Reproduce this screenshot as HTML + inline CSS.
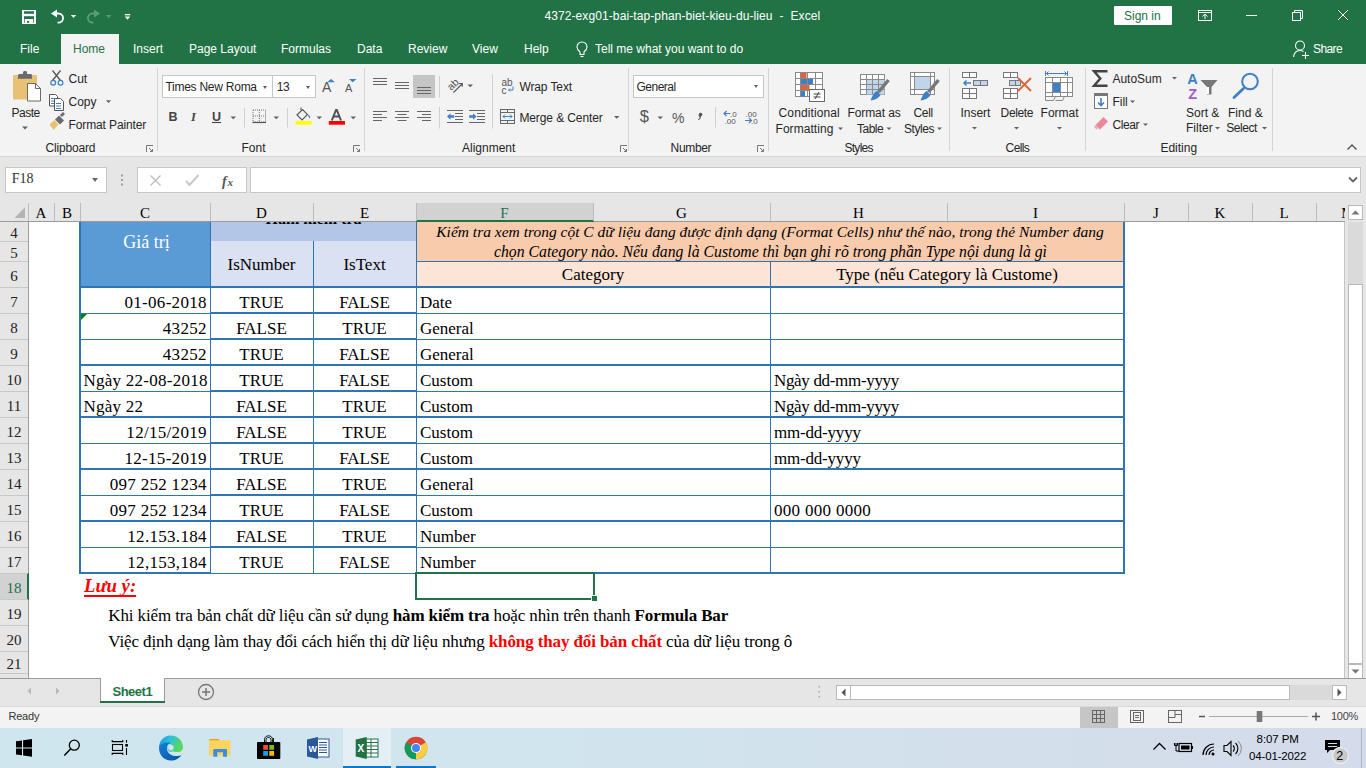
<!DOCTYPE html>
<html><head><meta charset="utf-8">
<style>
*{margin:0;padding:0;box-sizing:border-box}
html,body{width:1366px;height:768px;overflow:hidden;background:#fff;font-family:"Liberation Sans",sans-serif}
.a{position:absolute}
.ui{font-family:"Liberation Sans",sans-serif;font-size:12px;color:#262626;white-space:nowrap;line-height:1}
.sf{font-family:"Liberation Serif",serif;white-space:nowrap;line-height:1;color:#000}
svg{position:absolute;overflow:visible}
#title{left:0;top:0;width:1366px;height:64px;background:#217346}
#ribbon{left:0;top:64px;width:1366px;height:93px;background:#f3f3f3;border-bottom:1px solid #d6d6d6}
#fbar{left:0;top:157px;width:1366px;height:64px;background:#e6e6e6}
.sep{position:absolute;width:1px;background:#d4d4d4}
.lbl{position:absolute;font-size:12px;color:#444;top:142px}
.dd{position:absolute;width:0;height:0;border-left:3px solid transparent;border-right:3px solid transparent;border-top:3px solid #606060}
</style></head><body>
<!-- TITLE BAR -->
<div id="title" class="a"></div>
<div id="ribbon" class="a"></div>
<div id="fbar" class="a"></div>
<!-- QAT -->
<svg style="left:0;top:0" width="200" height="34">
 <path d="M22 10h14v14h-14zM24 11.2v11.6h10v-11.6z" fill="#fff" fill-rule="evenodd"/>
 <rect x="24" y="13.8" width="10" height="2.4" fill="#fff"/>
 <path d="M24.7 19h8.6v4h-4.1v-2h-2.2v2h-2.3z" fill="#fff"/>
 <path d="M51 13.5l6-4v8z" fill="#fff"/>
 <path d="M55.5 13.5h3a4.6 4.6 0 0 1 0 9.2h-1" fill="none" stroke="#fff" stroke-width="1.8"/>
 <path d="M70.8 15h5.4l-2.7 3z" fill="#fff"/>
 <path d="M100 13.5l-6-4v8z" fill="#5e9c79"/>
 <path d="M95.5 13.5h-3a4.6 4.6 0 0 0 0 9.2h1" fill="none" stroke="#5e9c79" stroke-width="1.8"/>
 <path d="M106 15h5.4l-2.7 3z" fill="#5e9c79"/>
 <rect x="124.8" y="14" width="5.4" height="1.3" fill="#fff"/>
 <path d="M124.8 16.5h5.4l-2.7 3.2z" fill="#fff"/>
</svg>
<div class="a ui" style="left:544.4px;top:10px;color:#fff;font-size:12px;letter-spacing:0.1px">4372-exg01-bai-tap-phan-biet-kieu-du-lieu&nbsp; - &nbsp;Excel</div>
<div class="a" style="left:1114px;top:6px;width:58px;height:19px;background:#fff;border-radius:1px"></div>
<div class="a ui" style="left:1124px;top:10px;color:#217346;font-size:12px">Sign in</div>
<svg style="left:1190px;top:0" width="176" height="34">
 <g fill="none" stroke="#fff" stroke-width="1">
  <rect x="8.5" y="10.5" width="13" height="10"/>
  <path d="M8.5 12.5h13"/>
  <path d="M15 19v-5M12.5 16.5l2.5-2.5 2.5 2.5"/>
  <path d="M56 15.5h11"/>
  <rect x="102.5" y="12.5" width="8" height="8"/>
  <path d="M104.5 12.5v-2h8v8h-2"/>
  <path d="M148 10l10 10M158 10l-10 10"/>
 </g>
</svg>
<!-- TABS -->
<div class="a" style="left:61px;top:34px;width:58px;height:31px;background:#f3f3f3"></div>
<div class="a ui" style="left:20px;top:43px;color:#fff">File</div>
<div class="a ui" style="left:73px;top:43px;color:#217346">Home</div>
<div class="a ui" style="left:133px;top:43px;color:#fff">Insert</div>
<div class="a ui" style="left:189px;top:43px;color:#fff">Page Layout</div>
<div class="a ui" style="left:281px;top:43px;color:#fff">Formulas</div>
<div class="a ui" style="left:357px;top:43px;color:#fff">Data</div>
<div class="a ui" style="left:408px;top:43px;color:#fff">Review</div>
<div class="a ui" style="left:472px;top:43px;color:#fff">View</div>
<div class="a ui" style="left:524px;top:43px;color:#fff">Help</div>
<svg style="left:574px;top:38px" width="20" height="22">
 <path d="M6 16.5v-2.5c-2-1.5-3-3-3-5a5 5 0 0 1 10 0c0 2-1 3.5-3 5v2.5z" fill="none" stroke="#fff" stroke-width="1.1"/>
 <path d="M6.5 18.5h3" stroke="#fff" stroke-width="1.1"/>
</svg>
<div class="a ui" style="left:595px;top:43px;color:#fff">Tell me what you want to do</div>
<svg style="left:1290px;top:38px" width="24" height="22">
 <g fill="none" stroke="#fff" stroke-width="1.1">
  <circle cx="10" cy="7.5" r="4.5"/>
  <path d="M3.5 19c0.5-4 3-6.5 6.5-6.5c1.5 0 2.5 0.4 3.5 1"/>
  <path d="M15.5 14v7M12 17.5h7"/>
 </g>
</svg>
<div class="a ui" style="left:1313px;top:43px;color:#fff;letter-spacing:-0.6px">Share</div>

<!-- RIBBON: CLIPBOARD -->
<svg style="left:0;top:64px" width="160" height="92">
 <rect x="13" y="11" width="24" height="24.6" rx="1" fill="#e9c175"/>
 <path d="M18 14.8h14v-3.3c0-1-0.6-1.5-1.5-1.5h-3.5v-1.5c0-0.8-0.6-1.5-1.5-1.5h-1c-0.8 0-1.5 0.7-1.5 1.5v1.5h-3.5c-0.9 0-1.5 0.5-1.5 1.5z" fill="#6b6b6b"/>
 <path d="M27.5 19.5h8l5 5v12.5h-13z" fill="#fff" stroke="#6b6b6b" stroke-width="1"/>
 <path d="M35.5 19.5v5h5" fill="none" stroke="#6b6b6b" stroke-width="1"/>
 <path d="M22 62.5h6l-3 3z" fill="#606060"/>
 <!-- scissors -->
 <g fill="none" stroke="#555" stroke-width="1.3"><path d="M52.5 6.5l8 10M60.5 6.5l-8 10"/></g>
 <g fill="none" stroke="#3f7fc6" stroke-width="1.2"><circle cx="53.2" cy="18.8" r="2.4"/><circle cx="60.5" cy="18.8" r="2.4"/></g>
 <!-- copy -->
 <g fill="#fff" stroke="#555" stroke-width="1"><path d="M49.5 30.5h6l2 2v9.5h-8z"/><path d="M54.5 34.5h6l3 3v9h-9z"/></g>
 <g stroke="#3f7fc6" stroke-width="1"><path d="M51 34.5h3M51 37h3M51 39.5h3M56 39.5h5M56 42h5M56 44.5h5"/></g>
 <path d="M106 36.3h5l-2.5 2.7z" fill="#606060"/>
 <!-- format painter -->
 <path d="M49.5 60.5l5-4.5 4 4.5-5 5.5z" fill="#e9c175"/>
 <path d="M55 55.5l4-4 5 5-4 4z" fill="#6b6b6b"/>
 <path d="M60 51l3-3 2 2-3 3z" fill="#6b6b6b"/>
 <!-- launcher -->
 <g fill="none" stroke="#777" stroke-width="1"><path d="M146.5 88v-6.5h6.5"/><path d="M149 84l3.5 3.5M150 87.5h2.5v-2.5"/></g>
</svg>
<div class="a ui" style="left:68.5px;top:72.8px">Cut</div>
<div class="a ui" style="left:68.5px;top:95.9px">Copy</div>
<div class="a ui" style="left:68.5px;top:118.5px;letter-spacing:-0.12px">Format Painter</div>
<div class="a ui" style="left:11.5px;top:106.7px;letter-spacing:-0.5px">Paste</div>
<div class="a ui" style="left:45.6px;top:142.3px;color:#262626;letter-spacing:-0.18px">Clipboard</div>
<div class="sep" style="left:157px;top:68px;height:83px"></div>
<!-- FONT -->
<div class="a" style="left:162px;top:75px;width:154px;height:23px;background:#fff;border:1px solid #c6c6c6"></div>
<div class="a" style="left:272px;top:75px;width:1px;height:23px;background:#c6c6c6"></div>
<div class="a ui" style="left:165.4px;top:80.7px;letter-spacing:-0.25px">Times New Roma</div>
<div class="a ui" style="left:276.8px;top:80.7px;letter-spacing:-0.5px">13</div>
<div class="dd" style="left:263px;top:85.5px;border-width:3px 2.8px 0"></div>
<div class="dd" style="left:305.5px;top:85.5px;border-width:3px 2.8px 0"></div>
<svg style="left:160px;top:64px" width="210" height="92">
 <g fill="#555" font-family="Liberation Sans" >
  <text x="162" y="28" font-size="14">A</text>
  <text x="185" y="28" font-size="11">A</text>
 </g>
 <path d="M167 18.3h8l-4-3.3z" fill="#3f7fc6"/>
 <path d="M189 15h7.5l-3.75 3.3z" fill="#3f7fc6"/>
 <text x="8.5" y="57" font-size="12.5" font-weight="bold" font-family="Liberation Sans" fill="#444">B</text>
 <text x="31" y="57" font-size="12.5" font-style="italic" font-family="Liberation Serif" fill="#444" font-weight="bold">I</text>
 <text x="52" y="57" font-size="12.5" font-weight="bold" font-family="Liberation Sans" fill="#444">U</text>
 <path d="M52 58.5h9" stroke="#444" stroke-width="1.1"/>
 <path d="M70.5 52.5h5.5l-2.75 2.7z" fill="#606060"/>
 <path d="M84.5 44v19.5" stroke="#cfcfcf"/>
 <g fill="none" stroke="#777" stroke-width="1" stroke-dasharray="1 1"><rect x="93" y="46" width="12.5" height="12"/><path d="M99.3 46v12M93 52h12.5"/></g>
 <path d="M92.5 58.5h13.5" stroke="#555" stroke-width="1.2"/>
 <path d="M113.5 52.5h5.5l-2.75 2.7z" fill="#606060"/>
 <path d="M127.5 44v19.5" stroke="#cfcfcf"/>
 <path d="M137 51l5.5-5.5 5 5-5.5 5.5z" fill="none" stroke="#555" stroke-width="1.1"/>
 <path d="M141 46v-2.5" stroke="#555" stroke-width="1.1"/>
 <path d="M148 50.5c1.5 0.5 2.5 2 2 4l-1.5-1.5z" fill="#3f7fc6"/>
 <rect x="135.5" y="57" width="16" height="3.7" fill="#ffff00"/>
 <path d="M156.5 52.5h5.5l-2.75 2.7z" fill="#606060"/>
 <path d="M171.8 56.5l4.2-10.5h0.8l4.2 10.5M173.5 52.5h6" fill="none" stroke="#505050" stroke-width="2"/>
 <rect x="168.8" y="57" width="16.2" height="3.7" fill="#ff0000"/>
 <path d="M190.5 52.5h5.5l-2.75 2.7z" fill="#606060"/>
 <g fill="none" stroke="#777" stroke-width="1"><path d="M193.5 88v-6.5h6.5"/><path d="M196 84l3.5 3.5M197 87.5h2.5v-2.5"/></g>
</svg>
<div class="a ui" style="left:241.5px;top:142.4px">Font</div>
<div class="sep" style="left:364px;top:68px;height:83px"></div>
<!-- ALIGNMENT -->
<div class="a" style="left:413px;top:75px;width:22px;height:23px;background:#c5c5c5"></div>
<svg style="left:360px;top:64px" width="270" height="92">
 <g stroke="#666" stroke-width="1">
  <path d="M13 14.5h14M13 17.5h14M13 20.5h14"/>
  <path d="M35 18.5h14M35 21.5h14M35 24.5h14"/>
  <path d="M57 23.5h14M57 26.5h14M57 29.5h14"/>
  <path d="M13 47.5h14M13 50.5h9M13 53.5h14M13 56.5h9"/>
  <path d="M35 47.5h14M37.5 50.5h9M35 53.5h14M37.5 56.5h9"/>
  <path d="M57 47.5h14M62 50.5h9M57 53.5h14M62 56.5h9"/>
  <path d="M87 46.5h16M95 49.5h8M95 52.5h8M95 55.5h8M87 58.5h16"/>
  <path d="M109 46.5h16M117 49.5h8M117 52.5h8M117 55.5h8M109 58.5h16"/>
 </g>
 <path d="M79.5 12v21.5M79.5 43v21.5" stroke="#cfcfcf"/>
 <path d="M87 52.5l3.5-3.3v2.1h3.8v2.4h-3.8v2.1z" fill="#3f7fc6"/>
 <path d="M116.5 52.5l-3.5-3.3v2.1h-3.8v2.4h3.8v2.1z" fill="#3f7fc6"/>
 <!-- orientation -->
 <text x="86.5" y="24.5" font-size="10.5" font-family="Liberation Sans" fill="#555" transform="rotate(-45 92 20)">ab</text>
 <path d="M93.5 28.5l8.5-8.5M99 19.5h3.3v3.3" fill="none" stroke="#555" stroke-width="1.1"/>
 <path d="M107.5 20.5h5.5l-2.75 2.7z" fill="#606060"/>
 <path d="M132.5 10.5v54" stroke="#cfcfcf"/>
 <!-- wrap text -->
 <text x="141.5" y="22" font-size="10" font-family="Liberation Sans" fill="#555">ab</text>
 <text x="141.5" y="29.5" font-size="10" font-family="Liberation Sans" fill="#555">c</text>
 <path d="M153 22.5v3.5h-4M150 24.5l-1.5 1.5 1.5 1.5" fill="none" stroke="#3f7fc6" stroke-width="1"/>
 <!-- merge -->
 <g fill="none" stroke="#666" stroke-width="1"><rect x="140.5" y="45.5" width="14" height="14"/><path d="M140.5 48.5h14M140.5 56.5h14M147.5 45.5v3M147.5 56.5v3"/></g>
 <path d="M143 52.5h9M145 50.5l-2 2 2 2M150 50.5l2 2-2 2" fill="none" stroke="#3f7fc6" stroke-width="1"/>
 <path d="M254 52h5.5l-2.75 2.7z" fill="#606060"/>
 <g fill="none" stroke="#777" stroke-width="1"><path d="M260.5 88v-6.5h6.5"/><path d="M263 84l3.5 3.5M264 87.5h2.5v-2.5"/></g>
</svg>
<div class="a ui" style="left:519.4px;top:80.7px;letter-spacing:-0.1px">Wrap Text</div>
<div class="a ui" style="left:519.4px;top:111.9px;letter-spacing:-0.1px">Merge &amp; Center</div>
<div class="a ui" style="left:462px;top:142.4px">Alignment</div>
<div class="sep" style="left:628px;top:68px;height:83px"></div>

<!-- NUMBER -->
<div class="a" style="left:633px;top:75px;width:131px;height:23px;background:#fff;border:1px solid #c6c6c6"></div>
<div class="a ui" style="left:636.5px;top:80.7px;letter-spacing:-0.5px">General</div>
<div class="dd" style="left:753.5px;top:85.3px;border-width:3px 2.8px 0"></div>
<svg style="left:630px;top:64px" width="140" height="92">
 <text x="9.8" y="58" font-size="16.5" font-family="Liberation Sans" fill="#555">$</text>
 <path d="M27.5 52.5h5.5l-2.75 2.7z" fill="#606060"/>
 <text x="42" y="58.5" font-size="14" font-family="Liberation Sans" fill="#555">%</text>
 <path d="M68.8 50.5a1.8 1.8 0 1 1 2.2 1.8c0 2-1 3.3-2.5 4l-0.5-0.8c1-0.6 1.6-1.5 1.6-2.6a1.8 1.8 0 0 1 -0.8 -2.4z" fill="#555"/>
 <path d="M85.5 43v20.5" stroke="#cfcfcf"/>
 <text x="100" y="52.5" font-size="8" font-family="Liberation Sans" fill="#555">.0</text>
 <text x="94.5" y="59.5" font-size="8" font-family="Liberation Sans" fill="#555">.00</text>
 <path d="M94 49.5h6.5M96.5 47l-2.5 2.5 2.5 2.5" fill="none" stroke="#3f7fc6" stroke-width="1.2"/>
 <text x="115.5" y="52.5" font-size="8" font-family="Liberation Sans" fill="#555">.00</text>
 <text x="121" y="59.5" font-size="8" font-family="Liberation Sans" fill="#555">.0</text>
 <path d="M115 56.5h6.5M119 54l2.5 2.5-2.5 2.5" fill="none" stroke="#3f7fc6" stroke-width="1.2"/>
 <g fill="none" stroke="#777" stroke-width="1"><path d="M127.5 88v-6.5h6.5"/><path d="M130 84l3.5 3.5M131 87.5h2.5v-2.5"/></g>
</svg>
<div class="a ui" style="left:670.6px;top:142.4px;letter-spacing:-0.35px">Number</div>
<div class="sep" style="left:768px;top:68px;height:83px"></div>
<!-- STYLES -->
<svg style="left:770px;top:64px" width="180" height="92">
 <!-- CF -->
 <g fill="#fff" stroke="#8a8a8a" stroke-width="1"><rect x="25.5" y="8.5" width="27" height="24"/></g>
 <rect x="31" y="9" width="5.5" height="5.5" fill="#e0623a"/>
 <rect x="31" y="15" width="12" height="5.5" fill="#3f7fc6"/>
 <rect x="31" y="21" width="8.5" height="5.5" fill="#e0623a"/>
 <rect x="31" y="27" width="4" height="5.5" fill="#3f7fc6"/>
 <g stroke="#8a8a8a" stroke-width="1"><path d="M30.5 8.5v24M37.5 8.5v24M45.5 8.5v24M25.5 14.5h27M25.5 20.5h27M25.5 26.5h27"/></g>
 <rect x="39.5" y="25.5" width="15" height="12" fill="#fff" stroke="#6b6b6b"/>
 <path d="M43.5 30h7M43.5 33h7M49 28l-4 7" stroke="#444" stroke-width="1"/>
 <!-- FaT -->
 <rect x="90.5" y="10.5" width="24" height="20" fill="#fff" stroke="#8a8a8a"/>
 <rect x="96" y="16" width="18.5" height="14.5" fill="#c0d5ea"/>
 <g stroke="#8a8a8a" stroke-width="1"><path d="M90.5 15.5h24M90.5 20.5h24M90.5 25.5h24M96.5 10.5v20M102.5 10.5v20M108.5 10.5v20"/></g>
 <path d="M118.5 16l-10 12" stroke="#777" stroke-width="3.5"/>
 <path d="M107 27c-3 1-4 4-6.5 9.5c3.5-0.5 8-2 10-5.5z" fill="#3f7fc6"/>
 <!-- CS -->
 <rect x="140.5" y="8.5" width="24" height="22" fill="#fff" stroke="#8a8a8a"/>
 <rect x="145" y="13" width="15" height="12.5" fill="#c0d5ea"/>
 <g stroke="#8a8a8a" stroke-width="1"><path d="M140.5 12.5h24M140.5 25.5h24M144.5 8.5v22M160.5 8.5v22"/></g>
 <path d="M168.5 16l-10 12" stroke="#777" stroke-width="3.5"/>
 <path d="M157 27c-3 1-4 4-6.5 9.5c3.5-0.5 8-2 10-5.5z" fill="#3f7fc6"/>
 <path d="M68 63.5h5l-2.5 2.5z" fill="#606060"/>
 <path d="M116.5 63.5h5l-2.5 2.5z" fill="#606060"/>
 <path d="M167 63.5h5l-2.5 2.5z" fill="#606060"/>
</svg>
<div class="a ui" style="left:778.6px;top:106.5px;letter-spacing:0.1px">Conditional</div>
<div class="a ui" style="left:775.5px;top:122.6px;letter-spacing:0.05px">Formatting</div>
<div class="a ui" style="left:847.5px;top:106.5px;letter-spacing:-0.1px">Format as</div>
<div class="a ui" style="left:857px;top:122.6px;letter-spacing:-0.5px">Table</div>
<div class="a ui" style="left:913.6px;top:106.5px;letter-spacing:-0.4px">Cell</div>
<div class="a ui" style="left:904px;top:122.6px;letter-spacing:-0.45px">Styles</div>
<div class="a ui" style="left:844.4px;top:142.4px;letter-spacing:-0.7px">Styles</div>
<div class="sep" style="left:949px;top:68px;height:83px"></div>
<!-- CELLS -->
<svg style="left:950px;top:64px" width="140" height="92">
 <g fill="#fff" stroke="#777" stroke-width="1">
  <rect x="12.5" y="8.5" width="14" height="5"/><path d="M19.5 8.5v5"/>
  <rect x="12.5" y="24.5" width="14" height="10"/><path d="M19.5 24.5v10M12.5 29.5h14"/>
  <rect x="53.5" y="8.5" width="14" height="5"/><path d="M60.5 8.5v5"/>
  <rect x="53.5" y="24.5" width="14" height="10"/><path d="M60.5 24.5v10M53.5 29.5h14"/>
 </g>
 <g fill="#c0d5ea" stroke="#777" stroke-width="1">
  <rect x="23.5" y="16.5" width="14" height="5"/><path d="M30.5 16.5v5"/>
  <rect x="59.5" y="16.5" width="11" height="5"/><path d="M65.5 16.5v5"/>
 </g>
 <path d="M14 19h7M16.5 16.5l-2.5 2.5 2.5 2.5" fill="none" stroke="#3f7fc6" stroke-width="1.5"/>
 <path d="M68 14l13 13M81 14l-13 13" stroke="#e0623a" stroke-width="1.8"/>
 <g stroke="#3f7fc6" stroke-width="1" fill="none"><path d="M95.5 7v5M117.5 7v5M96 9.5h21M98.5 7.5l-2 2 2 2M114.5 7.5l2 2-2 2"/></g>
 <rect x="95.5" y="13.5" width="27" height="19" fill="#fff" stroke="#8a8a8a"/>
 <g stroke="#8a8a8a" stroke-width="1"><path d="M95.5 18.5h27M95.5 28.5h27M102.5 13.5v19M110.5 13.5v19M117.5 13.5v19"/></g>
 <rect x="103" y="19" width="7" height="9" fill="#3f7fc6"/>
 <path d="M95.5 32.5v4h8l2-4M105.5 36.5h7l2-4" fill="none" stroke="#8a8a8a"/>
 <path d="M22 63h5l-2.5 2.5z" fill="#606060"/>
 <path d="M64 63h5l-2.5 2.5z" fill="#606060"/>
 <path d="M107 63h5l-2.5 2.5z" fill="#606060"/>
</svg>
<div class="a ui" style="left:960.4px;top:106.8px">Insert</div>
<div class="a ui" style="left:1000.6px;top:106.8px;letter-spacing:-0.35px">Delete</div>
<div class="a ui" style="left:1040.6px;top:106.8px">Format</div>
<div class="a ui" style="left:1005.6px;top:142.4px;letter-spacing:-0.6px">Cells</div>
<div class="sep" style="left:1085px;top:68px;height:83px"></div>
<!-- EDITING -->
<svg style="left:1085px;top:64px" width="200" height="92">
 <path d="M22.5 7.2h-13.5l6.3 7.3-6.3 7.3h13.5" fill="none" stroke="#444" stroke-width="2.4"/>
 <path d="M87 13h5l-2.5 2.5z" fill="#606060"/>
 <rect x="9.5" y="29.5" width="13" height="15" fill="#fff" stroke="#777"/>
 <rect x="9" y="29" width="14" height="3" fill="#777"/>
 <path d="M16 34v7M13 38.5l3 3 3-3" fill="none" stroke="#3f7fc6" stroke-width="1.6"/>
 <path d="M45 36.5h5l-2.5 2.5z" fill="#606060"/>
 <path d="M10.5 61l8-8 4.5 4.5-8 8z" fill="#e8889a"/>
 <path d="M10.5 61l3 3-2 1.5-2.5-2.5z" fill="#f0a9b6"/>
 <path d="M58 59.5h5l-2.5 2.5z" fill="#606060"/>
 <text x="102.3" y="20.3" font-size="14.5" font-weight="bold" font-family="Liberation Sans" fill="#3f7fc6">A</text>
 <text x="103.3" y="34.8" font-size="14.5" font-weight="bold" font-family="Liberation Sans" fill="#a05bc5">Z</text>
 <path d="M115.5 16h17l-6 7v7.5h-4.5v-7.5z" fill="#777"/>
 <path d="M121.5 23v7h2.5v-7" fill="#fff"/>
 <path d="M130 63h5l-2.5 2.5z" fill="#606060"/>
 <circle cx="165" cy="17.5" r="7.8" fill="none" stroke="#3f7fc6" stroke-width="2"/>
 <path d="M158.5 24.5l-9.5 9" stroke="#3f7fc6" stroke-width="2.8" stroke-linecap="round"/>
 <path d="M177 63h5l-2.5 2.5z" fill="#606060"/>
</svg>
<svg style="left:1340px;top:140px" width="20" height="14"><path d="M7.5 9.5l4.5-4.5 4.5 4.5" fill="none" stroke="#555" stroke-width="1.4"/></svg>
<div class="a ui" style="left:1112.4px;top:72.6px">AutoSum</div>
<div class="a ui" style="left:1112.4px;top:95.7px">Fill</div>
<div class="a ui" style="left:1112.4px;top:118.8px;letter-spacing:-0.4px">Clear</div>
<div class="a ui" style="left:1186px;top:106.6px">Sort &amp;</div>
<div class="a ui" style="left:1186px;top:122.3px">Filter</div>
<div class="a ui" style="left:1228px;top:106.6px">Find &amp;</div>
<div class="a ui" style="left:1226.3px;top:122.3px;letter-spacing:-0.45px">Select</div>
<div class="a ui" style="left:1160.4px;top:142.4px">Editing</div>
<div class="sep" style="left:1272px;top:68px;height:83px"></div>

<!-- FORMULA BAR -->
<div class="a" style="left:5px;top:167px;width:102px;height:26px;background:#fff;border:1px solid #c6c6c6"></div>
<div class="a sf" style="left:11.7px;top:172.1px;font-size:14px;color:#333">F18</div>
<div class="dd" style="left:92px;top:178px;border-width:4px 3.5px 0;border-top-color:#666"></div>
<svg style="left:115px;top:170px" width="20" height="22"><g fill="#a0a0a0"><rect x="6" y="4.5" width="2" height="2"/><rect x="6" y="9" width="2" height="2"/><rect x="6" y="13.5" width="2" height="2"/></g></svg>
<div class="a" style="left:137px;top:167px;width:110px;height:26px;background:#fff;border:1px solid #c6c6c6"></div>
<svg style="left:137px;top:167px" width="110" height="26">
 <path d="M13.5 8.5l10 10M23.5 8.5l-10 10" stroke="#bdbdbd" stroke-width="1.4"/>
 <path d="M49 14l3.5 4 9-10" fill="none" stroke="#c8c8c8" stroke-width="2"/>
 <text x="85" y="18.5" font-size="14" font-style="italic" font-weight="bold" font-family="Liberation Serif" fill="#555">f</text>
 <text x="90.5" y="18.5" font-size="11" font-style="italic" font-weight="bold" font-family="Liberation Serif" fill="#555">x</text>
</svg>
<div class="a" style="left:250px;top:167px;width:111px;height:26px;background:#fff;border:1px solid #c6c6c6;width:1111px"></div>
<svg style="left:1345px;top:172px" width="16" height="14"><path d="M4 5.5l4 4 4-4" fill="none" stroke="#666" stroke-width="1.8"/></svg>
<!-- COLUMN HEADERS -->
<div class="a" style="left:0;top:203px;width:1345px;height:18px;background:#e6e6e6"></div>
<div class="a" style="left:0;top:221px;width:1345px;height:1px;background:#9b9b9b"></div>
<div class="a" style="left:416px;top:203px;width:177px;height:18px;background:#d2d2d2"></div>
<div class="a" style="left:416px;top:220px;width:178px;height:2px;background:#217346"></div>
<svg style="left:0;top:203px" width="1345" height="19">
 <path d="M25 4.3v10.6h-10.4z" fill="#b4b4b4"/>
 <g stroke="#bcbcbc" stroke-width="1">
  <path d="M28.5 0v18M54.5 0v18M80.5 0v18M210.5 0v18M313.5 0v18M416.5 0v18M593.5 0v18M770.5 0v18M947.5 0v18M1124.5 0v18M1188.5 0v18M1252.5 0v18M1316.5 0v18"/>
 </g>
</svg>
<div class="a sf" style="left:0;top:206.3px;width:1345px;height:17px;font-size:15px">
 <span class="a" style="left:28px;width:26px;text-align:center">A</span>
 <span class="a" style="left:54px;width:26px;text-align:center">B</span>
 <span class="a" style="left:80px;width:130px;text-align:center">C</span>
 <span class="a" style="left:210px;width:103px;text-align:center">D</span>
 <span class="a" style="left:313px;width:103px;text-align:center">E</span>
 <span class="a" style="left:416px;width:177px;text-align:center;color:#217346">F</span>
 <span class="a" style="left:593px;width:177px;text-align:center">G</span>
 <span class="a" style="left:770px;width:177px;text-align:center">H</span>
 <span class="a" style="left:947px;width:177px;text-align:center">I</span>
 <span class="a" style="left:1124px;width:64px;text-align:center">J</span>
 <span class="a" style="left:1188px;width:64px;text-align:center">K</span>
 <span class="a" style="left:1252px;width:64px;text-align:center">L</span>
 <span class="a" style="left:1316px;width:64px;text-align:center">M</span>
</div>
<div class="a" style="left:1316px;top:203px;width:29px;height:18px;overflow:hidden"></div>
<!-- ROW HEADERS -->
<div class="a" style="left:0;top:222px;width:29px;height:456px;background:#e6e6e6;border-right:1px solid #9b9b9b"></div>
<div class="a" style="left:0;top:573px;width:28px;height:26px;background:#d2d2d2"></div>
<div class="a" style="left:27px;top:573px;width:2px;height:27px;background:#217346"></div>
<svg style="left:0;top:222px" width="28" height="456">
 <g stroke="#c8c8c8" stroke-width="1">
  <path d="M0 19.5h28M0 39.5h28M0 65.5h28M0 91.5h28M0 117.5h28M0 143.5h28M0 169.5h28M0 195.5h28M0 221.5h28M0 247.5h28M0 273.5h28M0 299.5h28M0 325.5h28M0 351.5h28M0 377.5h28M0 403.5h28M0 429.5h28M0 451.5h28"/>
 </g>
</svg>
<div class="a sf" style="left:0;top:224.3px;width:28px;height:456px;font-size:15px;text-align:center;color:#222">
 <span class="a" style="left:0;width:28px;top:2px">4</span>
 <span class="a" style="left:0;width:28px;top:22px">5</span>
 <span class="a" style="left:0;width:28px;top:45px">6</span>
 <span class="a" style="left:0;width:28px;top:71px">7</span>
 <span class="a" style="left:0;width:28px;top:97px">8</span>
 <span class="a" style="left:0;width:28px;top:123px">9</span>
 <span class="a" style="left:0;width:28px;top:149px">10</span>
 <span class="a" style="left:0;width:28px;top:175px">11</span>
 <span class="a" style="left:0;width:28px;top:201px">12</span>
 <span class="a" style="left:0;width:28px;top:227px">13</span>
 <span class="a" style="left:0;width:28px;top:253px">14</span>
 <span class="a" style="left:0;width:28px;top:279px">15</span>
 <span class="a" style="left:0;width:28px;top:305px">16</span>
 <span class="a" style="left:0;width:28px;top:331px">17</span>
 <span class="a" style="left:0;width:28px;top:357px;color:#217346">18</span>
 <span class="a" style="left:0;width:28px;top:383px">19</span>
 <span class="a" style="left:0;width:28px;top:409px">20</span>
 <span class="a" style="left:0;width:28px;top:433px">21</span>
</div>
<!-- GRID WHITE -->
<div class="a" style="left:29px;top:222px;width:1316px;height:456px;background:#fff;border-right:1px solid #c6c6c6"></div>

<!-- VSCROLL -->
<div class="a" style="left:1345px;top:203px;width:21px;height:475px;background:#e6e6e6"></div>
<div class="a" style="left:1348px;top:222px;width:15px;height:441px;background:#dadada"></div>
<div class="a" style="left:1348px;top:205px;width:15px;height:15px;background:#fff;border:1px solid #b9b9b9"></div>
<div class="a" style="left:1348px;top:664px;width:15px;height:15px;background:#fff;border:1px solid #b9b9b9"></div>
<div class="a" style="left:1348px;top:284px;width:15px;height:380px;background:#fff;border:1px solid #b9b9b9"></div>
<svg style="left:1348px;top:205px" width="15" height="15"><path d="M3.5 9.5h8l-4-4z" fill="#777"/></svg>
<svg style="left:1348px;top:664px" width="15" height="15"><path d="M3.5 5.5h8l-4 4z" fill="#777"/></svg>

<!-- TABLE -->
<div class="a" style="left:80px;top:222px;width:130px;height:64px;background:#5b9bd5"></div>
<div class="a" style="left:211px;top:222px;width:205px;height:19px;background:#b4c6e7"></div>
<div class="a" style="left:211px;top:241px;width:205px;height:45px;background:#d9e1f2"></div>
<div class="a" style="left:417px;top:222px;width:707px;height:39px;background:#f8cbad"></div>
<div class="a" style="left:417px;top:262px;width:707px;height:24px;background:#fce4d6"></div>
<div class="a" style="left:211px;top:222px;width:205px;height:19px;overflow:hidden"><div class="a sf" style="left:0;top:-11.3px;width:205px;text-align:center;font-weight:bold;font-size:16px">Hàm kiểm tra</div></div>
<div class="a" style="left:313px;top:241px;width:1px;height:46px;background:#2e75b6"></div>
<div class="a" style="left:417px;top:261px;width:707px;height:1px;background:#2e75b6"></div>
<div class="a" style="left:770px;top:262px;width:1px;height:25px;background:#2e75b6"></div>
<div class="a" style="left:79px;top:286px;width:1046px;height:2px;background:#2e75b6"></div>
<div class="a" style="left:79px;top:313px;width:131px;height:1px;background:#2e75b6"></div>
<div class="a" style="left:417px;top:313px;width:707px;height:1px;background:#2e75b6"></div>
<div class="a" style="left:211px;top:312px;width:206px;height:2px;background:#2e75b6"></div>
<div class="a" style="left:79px;top:339px;width:131px;height:1px;background:#2e75b6"></div>
<div class="a" style="left:417px;top:339px;width:707px;height:1px;background:#2e75b6"></div>
<div class="a" style="left:211px;top:338px;width:206px;height:2px;background:#2e75b6"></div>
<div class="a" style="left:79px;top:364px;width:1046px;height:2px;background:#2e75b6"></div>
<div class="a" style="left:79px;top:391px;width:131px;height:1px;background:#2e75b6"></div>
<div class="a" style="left:417px;top:391px;width:707px;height:1px;background:#2e75b6"></div>
<div class="a" style="left:211px;top:390px;width:206px;height:2px;background:#2e75b6"></div>
<div class="a" style="left:79px;top:416px;width:1046px;height:2px;background:#2e75b6"></div>
<div class="a" style="left:79px;top:443px;width:131px;height:1px;background:#2e75b6"></div>
<div class="a" style="left:417px;top:443px;width:707px;height:1px;background:#2e75b6"></div>
<div class="a" style="left:211px;top:442px;width:206px;height:2px;background:#2e75b6"></div>
<div class="a" style="left:79px;top:468px;width:1046px;height:2px;background:#2e75b6"></div>
<div class="a" style="left:79px;top:495px;width:131px;height:1px;background:#2e75b6"></div>
<div class="a" style="left:417px;top:495px;width:707px;height:1px;background:#2e75b6"></div>
<div class="a" style="left:211px;top:494px;width:206px;height:2px;background:#2e75b6"></div>
<div class="a" style="left:79px;top:520px;width:1046px;height:2px;background:#2e75b6"></div>
<div class="a" style="left:79px;top:547px;width:131px;height:1px;background:#2e75b6"></div>
<div class="a" style="left:417px;top:547px;width:707px;height:1px;background:#2e75b6"></div>
<div class="a" style="left:211px;top:546px;width:206px;height:2px;background:#2e75b6"></div>
<div class="a" style="left:79px;top:572px;width:132px;height:2px;background:#2e75b6"></div><div class="a" style="left:211px;top:573px;width:206px;height:1px;background:#2e75b6"></div><div class="a" style="left:417px;top:572px;width:708px;height:2px;background:#2e75b6"></div>
<div class="a" style="left:79px;top:222px;width:2px;height:352px;background:#2e75b6"></div>
<div class="a" style="left:210px;top:222px;width:1px;height:352px;background:#2e75b6"></div>
<div class="a" style="left:313px;top:287px;width:1px;height:287px;background:#2e75b6"></div>
<div class="a" style="left:416px;top:222px;width:1px;height:352px;background:#2e75b6"></div>
<div class="a" style="left:770px;top:287px;width:1px;height:287px;background:#2e75b6"></div>
<div class="a" style="left:1123px;top:222px;width:2px;height:352px;background:#2e75b6"></div>
<div class="a sf" style="left:81.5px;top:233px;width:130px;text-align:center;font-size:18px;color:#fff">Giá trị</div>
<div class="a sf" style="left:210px;top:255.8px;width:103px;text-align:center;font-size:17px">IsNumber</div>
<div class="a sf" style="left:313px;top:255.8px;width:103px;text-align:center;font-size:17px">IsText</div>
<div class="a sf" style="left:416px;top:224px;width:708px;text-align:center;font-size:15.5px;font-style:italic">Kiểm tra xem trong cột C dữ liệu đang được định dạng (Format Cells) như thế nào, trong thẻ Number đang</div>
<div class="a sf" style="left:416px;top:243.7px;width:708px;text-align:center;font-size:15.75px;font-style:italic;padding-left:1px">chọn Category nào. Nếu đang là Custome thì bạn ghi rõ trong phần Type nội dung là gì</div>
<div class="a sf" style="left:416px;top:265.6px;width:354px;text-align:center;font-size:17px">Category</div>
<div class="a sf" style="left:770px;top:265.6px;width:354px;text-align:center;font-size:17px">Type (nếu Category là Custome)</div>
<div class="a sf" id="tbl" style="left:0;top:0;font-size:17px">

<div class="a" style="left:80px;top:294px;width:126.8px;text-align:right;letter-spacing:0.3px">01-06-2018</div>
<div class="a" style="left:210px;top:294px;width:103px;text-align:center">TRUE</div>
<div class="a" style="left:313px;top:294px;width:103px;text-align:center">FALSE</div>
<div class="a" style="left:420px;top:294px">Date</div>
<div class="a" style="left:80px;top:320px;width:126.8px;text-align:right;letter-spacing:0.3px">43252</div>
<div class="a" style="left:210px;top:320px;width:103px;text-align:center">FALSE</div>
<div class="a" style="left:313px;top:320px;width:103px;text-align:center">TRUE</div>
<div class="a" style="left:420px;top:320px">General</div>
<div class="a" style="left:80px;top:346px;width:126.8px;text-align:right;letter-spacing:0.3px">43252</div>
<div class="a" style="left:210px;top:346px;width:103px;text-align:center">TRUE</div>
<div class="a" style="left:313px;top:346px;width:103px;text-align:center">FALSE</div>
<div class="a" style="left:420px;top:346px">General</div>
<div class="a" style="letter-spacing:0.25px;left:83.5px;top:372px">Ngày 22-08-2018</div>
<div class="a" style="left:210px;top:372px;width:103px;text-align:center">TRUE</div>
<div class="a" style="left:313px;top:372px;width:103px;text-align:center">FALSE</div>
<div class="a" style="left:420px;top:372px">Custom</div>
<div class="a" style="left:774px;top:372px;letter-spacing:-0.33px">Ngày dd-mm-yyyy</div>
<div class="a" style="letter-spacing:0.25px;left:83.5px;top:398px">Ngày 22</div>
<div class="a" style="left:210px;top:398px;width:103px;text-align:center">FALSE</div>
<div class="a" style="left:313px;top:398px;width:103px;text-align:center">TRUE</div>
<div class="a" style="left:420px;top:398px">Custom</div>
<div class="a" style="left:774px;top:398px;letter-spacing:-0.33px">Ngày dd-mm-yyyy</div>
<div class="a" style="left:80px;top:424px;width:126.8px;text-align:right;letter-spacing:0.3px">12/15/2019</div>
<div class="a" style="left:210px;top:424px;width:103px;text-align:center">FALSE</div>
<div class="a" style="left:313px;top:424px;width:103px;text-align:center">TRUE</div>
<div class="a" style="left:420px;top:424px">Custom</div>
<div class="a" style="left:774px;top:424px;letter-spacing:-0.2px">mm-dd-yyyy</div>
<div class="a" style="left:80px;top:450px;width:126.8px;text-align:right;letter-spacing:0.3px">12-15-2019</div>
<div class="a" style="left:210px;top:450px;width:103px;text-align:center">TRUE</div>
<div class="a" style="left:313px;top:450px;width:103px;text-align:center">FALSE</div>
<div class="a" style="left:420px;top:450px">Custom</div>
<div class="a" style="left:774px;top:450px;letter-spacing:-0.2px">mm-dd-yyyy</div>
<div class="a" style="left:80px;top:476px;width:126.8px;text-align:right;letter-spacing:0.3px">097 252 1234</div>
<div class="a" style="left:210px;top:476px;width:103px;text-align:center">FALSE</div>
<div class="a" style="left:313px;top:476px;width:103px;text-align:center">TRUE</div>
<div class="a" style="left:420px;top:476px">General</div>
<div class="a" style="left:80px;top:502px;width:126.8px;text-align:right;letter-spacing:0.3px">097 252 1234</div>
<div class="a" style="left:210px;top:502px;width:103px;text-align:center">TRUE</div>
<div class="a" style="left:313px;top:502px;width:103px;text-align:center">FALSE</div>
<div class="a" style="left:420px;top:502px">Custom</div>
<div class="a" style="left:774px;top:502px;letter-spacing:0.3px">000 000 0000</div>
<div class="a" style="left:80px;top:528px;width:126.8px;text-align:right;letter-spacing:0.3px">12.153.184</div>
<div class="a" style="left:210px;top:528px;width:103px;text-align:center">FALSE</div>
<div class="a" style="left:313px;top:528px;width:103px;text-align:center">TRUE</div>
<div class="a" style="left:420px;top:528px">Number</div>
<div class="a" style="left:80px;top:554px;width:126.8px;text-align:right;letter-spacing:0.3px">12,153,184</div>
<div class="a" style="left:210px;top:554px;width:103px;text-align:center">TRUE</div>
<div class="a" style="left:313px;top:554px;width:103px;text-align:center">FALSE</div>
<div class="a" style="left:420px;top:554px">Number</div>
</div>
<svg style="left:81px;top:314px" width="7" height="7"><path d="M0 0h6l-6 6z" fill="#008000"/></svg>
<div class="a sf" style="left:84px;top:577px;font-size:18.67px;font-weight:bold;font-style:italic;color:#ff0000;text-decoration:underline;text-decoration-skip-ink:none;text-decoration-thickness:2px;text-underline-offset:2.5px">Lưu ý:</div>
<div class="a sf" style="left:108.3px;top:607.3px;font-size:17px;letter-spacing:-0.12px">Khi kiểm tra bản chất dữ liệu cần sử dụng <b>hàm kiểm tra</b> hoặc nhìn trên thanh <b>Formula Bar</b></div>
<div class="a sf" style="left:108.3px;top:633px;font-size:17px;letter-spacing:-0.11px">Việc định dạng làm thay đổi cách hiển thị dữ liệu nhưng <b style="color:#ff0000">không thay đổi bản chất</b> của dữ liệu trong ô</div>
<div class="a" style="left:415px;top:572px;width:180px;height:28px;border:2px solid #217346"></div>
<div class="a" style="left:592px;top:596px;width:5px;height:5px;background:#217346;border:1px solid #fff;box-sizing:content-box;margin:-1px"></div>
<!-- SHEET TABS -->
<div class="a" style="left:0;top:678px;width:1366px;height:28px;background:#e6e6e6;border-top:1px solid #9b9b9b"></div>
<svg style="left:0;top:678px" width="230" height="28">
 <path d="M31 9.5v7l-3.5-3.5z" fill="#b8b8b8"/>
 <path d="M56 9.5v7l3.5-3.5z" fill="#b8b8b8"/>
 <circle cx="206" cy="14" r="7.5" fill="none" stroke="#777" stroke-width="1.3"/>
 <path d="M206 10v8M202 14h8" stroke="#777" stroke-width="1.5"/>
</svg>
<div class="a" style="left:100px;top:678px;width:65px;height:25px;background:#fff;border-left:1px solid #9b9b9b;border-right:1px solid #9b9b9b"></div>
<div class="a" style="left:100px;top:701px;width:65px;height:2px;background:#217346"></div>
<div class="a ui" style="left:112.5px;top:684.7px;font-weight:bold;color:#217346;font-size:13px;letter-spacing:-0.5px">Sheet1</div>
<svg style="left:815px;top:684px" width="10" height="18"><g fill="#aaa"><rect x="3.5" y="2" width="1.5" height="1.5"/><rect x="3.5" y="7" width="1.5" height="1.5"/><rect x="3.5" y="12" width="1.5" height="1.5"/></g></svg>
<div class="a" style="left:836px;top:685px;width:511px;height:15px;background:#dadada"></div>
<div class="a" style="left:836px;top:685px;width:15px;height:15px;background:#fff;border:1px solid #b9b9b9"></div>
<div class="a" style="left:850px;top:685px;width:440px;height:15px;background:#fff;border:1px solid #b9b9b9"></div>
<div class="a" style="left:1332px;top:685px;width:15px;height:15px;background:#fff;border:1px solid #b9b9b9"></div>
<svg style="left:836px;top:685px" width="15" height="15"><path d="M9.5 3.5v8l-4-4z" fill="#555"/></svg>
<svg style="left:1332px;top:685px" width="15" height="15"><path d="M5.5 3.5v8l4-4z" fill="#555"/></svg>
<!-- STATUS BAR -->
<div class="a" style="left:0;top:706px;width:1366px;height:22px;background:#f3f3f3;border-top:1px solid #dadada"></div>
<div class="a ui" style="left:8.4px;top:710.5px;color:#333;font-size:11px;letter-spacing:-0.2px">Ready</div>
<div class="a" style="left:1080px;top:707px;width:38px;height:21px;background:#c6c6c6"></div>
<svg style="left:1080px;top:706px" width="200" height="22">
 <g fill="none" stroke="#666" stroke-width="1">
  <rect x="12.5" y="4.5" width="12" height="12"/><path d="M16.5 4.5v12M20.5 4.5v12M12.5 8.5h12M12.5 12.5h12"/>
  <rect x="50.5" y="4.5" width="13" height="12"/><rect x="53.5" y="6.5" width="7" height="8"/><path d="M55 9.5h4M55 11.5h4"/>
  <rect x="88.5" y="4.5" width="13" height="12"/><path d="M88.5 11.5h6.5v-7M95 8.5h6.5"/>
 </g>
 <path d="M119 10.5h6" stroke="#555" stroke-width="1.5"/>
 <path d="M129 10.5h99" stroke="#aaa" stroke-width="1"/>
 <rect x="176.7" y="5" width="5.6" height="11" fill="#777"/>
</svg>
<svg style="left:1305px;top:706px" width="20" height="22"><path d="M7 10.5h8M11 6.5v8" stroke="#555" stroke-width="1.5"/></svg>
<div class="a ui" style="left:1331px;top:711px;color:#444;font-size:11px;letter-spacing:-0.3px">100%</div>
<!-- TASKBAR -->
<div class="a" style="left:0;top:728px;width:1366px;height:40px;background:linear-gradient(90deg,#cfe6ee 0%,#d1e5ee 40%,#d3dfeb 75%,#d4dbea 100%)"></div>
<div class="a" style="left:343px;top:728px;width:48px;height:40px;background:#e3eff4"></div>
<div class="a" style="left:343px;top:766px;width:48px;height:2px;background:#0078d7"></div>
<div class="a" style="left:396px;top:766px;width:40px;height:2px;background:#0078d7"></div>
<svg style="left:0;top:728px" width="450" height="40">
 <!-- windows -->
 <path d="M16 13.3l6-0.8v6.9h-6zM23.1 12.3l8.9-1.2v8.3h-8.9zM16 20.4h6v6.9l-6-0.8zM23.1 20.4h8.9v8.3l-8.9-1.2z" fill="#000"/>
 <!-- search -->
 <circle cx="74.3" cy="17.2" r="5" fill="none" stroke="#000" stroke-width="1.3"/>
 <path d="M70.8 20.7l-6.5 6.8" stroke="#000" stroke-width="1.5"/>
 <!-- task view -->
 <g fill="none" stroke="#000" stroke-width="1.1"><rect x="112.5" y="16.5" width="10" height="6"/><path d="M112.2 12v1.6h10.6v-1.6M112.2 27v-1.6h10.6v1.6M126.5 12v2.8M126.5 20v7"/></g>
 <rect x="125.3" y="16" width="2.6" height="2.6" fill="#000"/>
 <!-- edge -->
 <defs>
  <linearGradient id="eg" x1="0" y1="0" x2="1" y2="0.3"><stop offset="0" stop-color="#1a8fe0"/><stop offset="0.45" stop-color="#2cbfe0"/><stop offset="1" stop-color="#5ad85a"/></linearGradient>
  <linearGradient id="eg3" x1="0" y1="0" x2="1" y2="1"><stop offset="0" stop-color="#1382d8"/><stop offset="1" stop-color="#0b4fa0"/></linearGradient>
 </defs>
 <path d="M159 20a12 12 0 0 1 24 -1c0 3-2 5-5 5h-7c-2 0-3.5-1.5-3.5-3.5a3.5 3.5 0 0 1 3.5-3.5c-3-3-9-2-12 3z" fill="url(#eg)"/>
 <path d="M159 20c0 7 5 12.5 12 12.5c4.5 0 8.5-2.3 10.5-5.8c-2 1.3-4.5 1.5-6.5 1.3c-5 -0.5-8.5-4-8-8.5c0.3-2.5 2-4 4-4.5c-6-1.5-12 1-12 5z" fill="url(#eg3)"/>
 <circle cx="170.8" cy="19.6" r="2.8" fill="#d2e5ee"/>
 <path d="M172.5 22.5c1.5 1.5 3.5 1.8 5.5 1.8h5l-1.5 2.5c-3 1-7 0.5-9-1.5z" fill="#d2e5ee"/>
 <!-- explorer -->
 <path d="M210 11h8.5l1.5 1.5v1.8h-11v-2.3z" fill="#e0a010"/>
 <rect x="209" y="12.2" width="21.5" height="15.5" rx="0.5" fill="#ffd35f"/>
 <path d="M213.3 28.7v-6.5c0-0.7 0.5-1.2 1.2-1.2h11.3c0.7 0 1.2 0.5 1.2 1.2v6.5h-4v-4.5h-5.7v4.5z" fill="#3b8de0"/>
 <!-- store -->
 <rect x="257" y="14" width="23.3" height="17" rx="0.8" fill="#000"/>
 <path d="M264.5 14v-2.5c0-2.2 1.8-3.7 4-3.7s4 1.5 4 3.7v2.5M266 14v-2c0-1.5 1-2.5 2.5-2.5s2.5 1 2.5 2.5v2M273.5 14v-4" fill="none" stroke="#000" stroke-width="0.9"/>
 <rect x="263.2" y="17" width="4.8" height="4.8" fill="#f25022"/>
 <rect x="269.3" y="17" width="4.8" height="4.8" fill="#7fba00"/>
 <rect x="263.2" y="23" width="4.8" height="4.8" fill="#00a4ef"/>
 <rect x="269.3" y="23" width="4.8" height="4.8" fill="#ffb900"/>
 <!-- word -->
 <rect x="317" y="11" width="12" height="18" fill="#fff" stroke="#2b579a" stroke-width="1"/>
 <g stroke="#2b579a" stroke-width="1"><path d="M319 14.5h8M319 17h8M319 19.5h8M319 22h8M319 24.5h8"/></g>
 <path d="M307 11.5l11-2.5v22l-11-2.5z" fill="#2b579a"/>
 <text x="308.5" y="24" font-size="9" font-weight="bold" font-family="Liberation Sans" fill="#fff">W</text>
 <!-- excel -->
 <rect x="366" y="11" width="12" height="18" fill="#fff" stroke="#217346" stroke-width="1"/>
 <g stroke="#217346" stroke-width="1"><path d="M366 14.5h12M366 18h12M366 21.5h12M366 25h12M371 11v18"/></g>
 <path d="M355.7 11.5l11-2.5v22l-11-2.5z" fill="#217346"/>
 <text x="357.5" y="24" font-size="10" font-weight="bold" font-family="Liberation Sans" fill="#fff">X</text>
 <!-- chrome -->
 <circle cx="416" cy="20" r="11.3" fill="#db4437"/>
 <path d="M416 20L406.2 25.65A11.3 11.3 0 0 1 406.2 14.35z" fill="#0f9d58"/>
 <path d="M416 20l-9.8 5.65a11.3 11.3 0 0 0 9.8 5.65a11.3 11.3 0 0 0 9.8 -5.65z" fill="#0f9d58"/>
 <path d="M416 20l9.8-5.65a11.3 11.3 0 0 1 -9.8 16.95z" fill="#ffcd40"/>
 <circle cx="416" cy="20" r="5" fill="#fff"/>
 <circle cx="416" cy="20" r="4" fill="#4285f4"/>
</svg>
<svg style="left:1140px;top:728px" width="226" height="40">
 <path d="M13.5 21.5l6-6 6 6" fill="none" stroke="#000" stroke-width="1.3"/>
 <rect x="39" y="15.5" width="12.5" height="8" fill="none" stroke="#000" stroke-width="1.2"/>
 <rect x="41" y="17.5" width="8.5" height="4" fill="#000"/>
 <rect x="51.5" y="18" width="1.5" height="3" fill="#000"/>
 <path d="M36 15v5M34.5 15v2.5h3V15M36 20v3h3" fill="none" stroke="#000" stroke-width="1"/>
 <g fill="none" stroke="#000" stroke-width="1.2"><path d="M63 27a11 11 0 0 1 11-11M66 27a8 8 0 0 1 8-8M69 27a5 5 0 0 1 5-5"/></g>
 <circle cx="73" cy="26" r="1.5" fill="#000"/>
 <path d="M84 17.5h3l4-4v14l-4-4h-3z" fill="none" stroke="#000" stroke-width="1.1"/>
 <path d="M93 17.5a4 4 0 0 1 0 6M95.5 15a7.5 7.5 0 0 1 0 11" fill="none" stroke="#000" stroke-width="1.1"/>
 <path d="M98 13a10 10 0 0 1 0 15" fill="none" stroke="#888" stroke-width="1"/>
 <path d="M185 12h15v10h-10l-3 3v-3h-2z" fill="#000"/>
 <g stroke="#d3dce9" stroke-width="1"><path d="M188 15.5h9M188 18.5h9"/></g>
 <circle cx="200.5" cy="27.5" r="8" fill="#c8c8c8" stroke="#e8ecf2" stroke-width="1.5"/>
 <text x="196.3" y="32" font-size="12.5" font-family="Liberation Sans" fill="#000">2</text>
 <path d="M221.5 0v40" stroke="#a9b4c2" stroke-width="1"/>
</svg>
<div class="a ui" style="left:1256.6px;top:733.5px;color:#000;font-size:11.5px;letter-spacing:-0.1px">8:07 PM</div>
<div class="a ui" style="left:1249px;top:750.5px;color:#000;font-size:11.5px;letter-spacing:-0.15px">04-01-2022</div>

</body></html>
